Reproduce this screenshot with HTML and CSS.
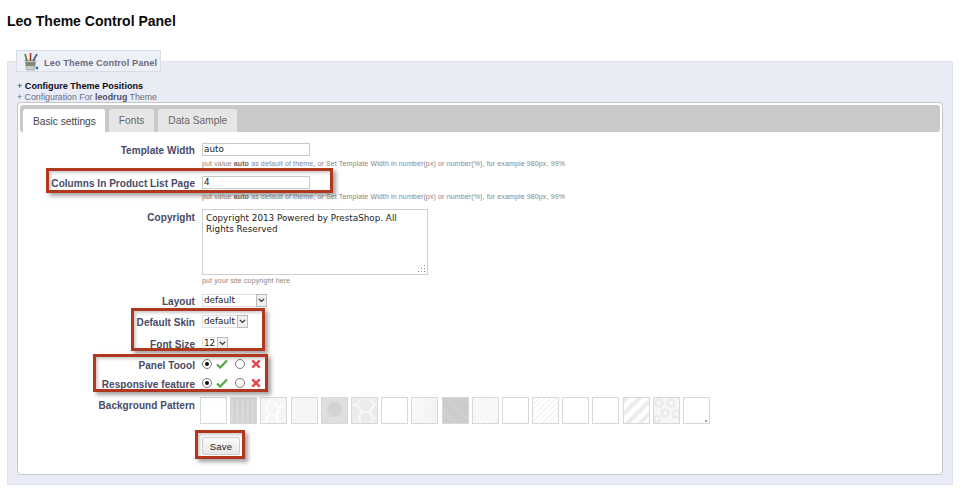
FILE: index.html
```html
<!DOCTYPE html>
<html lang="en">
<head>
<meta charset="utf-8">
<title>Leo Theme Control Panel</title>
<link rel="stylesheet" href="styles.css">
</head>
<body>
<h1 class="title">Leo Theme Control Panel</h1>
<fieldset class="panel">
  <legend class="legend">
    <svg class="legend-icon" width="19" height="19" viewBox="0 0 19 19">
      <path d="M4 8h11l-1.5 10h-8z" fill="#c9ccc8" stroke="#8b8f8c" stroke-width=".6"/>
      <rect x="5" y="10" width="9" height="4" fill="#7f8a76"/>
      <path d="M6 9L4 2" stroke="#5c7a3a" stroke-width="1.6"/>
      <path d="M9.5 9V1" stroke="#a33b2a" stroke-width="1.6"/>
      <path d="M12 9l4-7" stroke="#3c5f94" stroke-width="1.6"/>
      <circle cx="16" cy="16" r="1.4" fill="#2f78c4"/>
    </svg>
    <span class="legend-text">Leo Theme Control Panel</span>
  </legend>
  <div class="crumb crumb-strong">+ <b>Configure Theme Positions</b></div>
  <div class="crumb">+ Configuration For <b>leodrug</b> Theme</div>
  <div class="tabs">
    <div class="tabbar">
      <span class="tab tab-active">Basic settings</span>
      <span class="tab">Fonts</span>
      <span class="tab">Data Sample</span>
    </div>
    <form class="pane">
      <div class="row row-width">
        <label class="lbl">Template Width</label>
        <div class="field">
          <div class="textbox">auto</div>
          <p class="hint">put value <b>auto</b> as default of theme, or Set Template Width in number(px) or number(%), for example 980px, 99%</p>
        </div>
      </div>
      <div class="row row-cols">
        <label class="lbl">Columns In Product List Page</label>
        <div class="field">
          <div class="textbox">4</div>
          <p class="hint">put value <b>auto</b> as default of theme, or Set Template Width in number(px) or number(%), for example 980px, 99%</p>
        </div>
      </div>
      <div class="row row-copy">
        <label class="lbl">Copyright</label>
        <div class="field">
          <div class="textarea">Copyright 2013 Powered by PrestaShop. All Rights Reserved
            <svg class="grip" width="9" height="9" viewBox="0 0 9 9"><path d="M7 1h1v1H7zM4 4h1v1H4zM7 4h1v1H7zM1 7h1v1H1zM4 7h1v1H4zM7 7h1v1H7z" fill="#888"/></svg>
          </div>
          <p class="hint hint-copy">put your site copyright here</p>
        </div>
      </div>
      <div class="row row-layout">
        <label class="lbl">Layout</label>
        <div class="field"><div class="select select-layout"><span class="select-val">default</span><span class="caret"><svg width="7" height="5" viewBox="0 0 7 5"><path d="M.8.8l2.7 2.7L6.2.8" fill="none" stroke="#333" stroke-width="1.2"/></svg></span></div></div>
      </div>
      <div class="row row-skin">
        <label class="lbl">Default Skin</label>
        <div class="field"><div class="select select-skin"><span class="select-val">default</span><span class="caret"><svg width="7" height="5" viewBox="0 0 7 5"><path d="M.8.8l2.7 2.7L6.2.8" fill="none" stroke="#333" stroke-width="1.2"/></svg></span></div></div>
      </div>
      <div class="row row-font">
        <label class="lbl">Font Size</label>
        <div class="field"><div class="select select-font"><span class="select-val">12</span><span class="caret"><svg width="7" height="5" viewBox="0 0 7 5"><path d="M.8.8l2.7 2.7L6.2.8" fill="none" stroke="#333" stroke-width="1.2"/></svg></span></div></div>
      </div>
      <div class="row row-panel">
        <label class="lbl">Panel Toool</label>
        <div class="field toggle">
          <span class="radio radio-on"></span>
          <svg class="ico" width="12" height="10" viewBox="0 0 12 10"><path d="M1 5.5l3.2 3L11 1.5" fill="none" stroke="#55a648" stroke-width="2.2"/></svg>
          <span class="radio"></span>
          <svg class="ico" width="10" height="10" viewBox="0 0 10 10"><path d="M1.3 1.3l7.4 7.4M8.7 1.3L1.3 8.7" fill="none" stroke="#e8474c" stroke-width="2.4"/></svg>
        </div>
      </div>
      <div class="row row-resp">
        <label class="lbl">Responsive feature</label>
        <div class="field toggle">
          <span class="radio radio-on"></span>
          <svg class="ico" width="12" height="10" viewBox="0 0 12 10"><path d="M1 5.5l3.2 3L11 1.5" fill="none" stroke="#55a648" stroke-width="2.2"/></svg>
          <span class="radio"></span>
          <svg class="ico" width="10" height="10" viewBox="0 0 10 10"><path d="M1.3 1.3l7.4 7.4M8.7 1.3L1.3 8.7" fill="none" stroke="#e8474c" stroke-width="2.4"/></svg>
        </div>
      </div>
      <div class="row row-bg">
        <label class="lbl">Background Pattern</label>
        <div class="field swatches">
          <span class="sw"></span>
          <span class="sw sw-stripes"></span>
          <span class="sw sw-pale"><svg width="25" height="25" viewBox="0 0 25 25"><path d="M4 25L8 16 5 9 9 2M8 16l7 2 3-8 5-4M15 18l2 7M18 10l-5-6" fill="none" stroke="#fff" stroke-width="1.6"/></svg></span>
          <span class="sw sw-pale"></span>
          <span class="sw sw-blot"></span>
          <span class="sw sw-hexbg"><svg width="25" height="25" viewBox="0 0 25 25"><path d="M0 7h5l4-6M5 7l5 7-3 6 2 5M10 14h8l4-7h3M22 7l-4-6M18 14l3 6h4M21 20l-2 5" fill="none" stroke="#fafafa" stroke-width="1.6"/></svg></span>
          <span class="sw"></span>
          <span class="sw sw-fade"></span>
          <span class="sw sw-dots"></span>
          <span class="sw sw-noise"></span>
          <span class="sw"></span>
          <span class="sw sw-fine"></span>
          <span class="sw"></span>
          <span class="sw"></span>
          <span class="sw sw-wide"></span>
          <span class="sw sw-rings"><svg width="25" height="25" viewBox="0 0 25 25"><g fill="none" stroke="#e9e9e9" stroke-width="2"><circle cx="5" cy="5" r="3.5"/><circle cx="17" cy="5" r="3.5"/><circle cx="11" cy="15" r="3.5"/><circle cx="22" cy="16" r="3.5"/><circle cx="3" cy="21" r="3"/></g></svg></span>
          <span class="sw sw-speck"></span>
        </div>
      </div>
      <div class="row row-save">
        <span></span>
        <div class="field"><button type="button" class="save">Save</button></div>
      </div>
      <div class="mark mark-cols"></div>
      <div class="mark mark-skin"></div>
      <div class="mark mark-toggle"></div>
      <div class="mark mark-save"></div>
    </form>
  </div>
</fieldset>
</body>
</html>
```

FILE: styles.css
```css
html, body { margin: 0; padding: 0; background: #fff; }
body { width: 960px; height: 492px; overflow: hidden; font-family: "Liberation Sans", Arial, sans-serif; color: #383b58; }

.title { margin: 0; padding: 13px 0 0 7px; height: 50px; box-sizing: border-box; font-size: 14px; line-height: 16px; font-weight: bold; color: #0b0b0b; }

.panel { margin: 0 7px; padding: 9px 9px 9px; min-width: 0; height: 435px; box-sizing: border-box; border: 1px solid #dfe1ec; background: #e9ecf5; }
.legend { margin-left: -1px; padding: 0 3px 0 4px; height: 22px; box-sizing: border-box; display: flex; align-items: center; gap: 4px; border: 1px solid #d9dbe7; background: #eef0f7; font-size: 9.2px; font-weight: bold; color: #6a6d80; letter-spacing: .1px; }
.legend-icon { display: block; }
.legend-text { padding-top: 4px; }

.crumb { font-size: 8.8px; line-height: 11px; color: #6a6d80; }
.crumb-strong { font-size: 9.1px; color: #333; }
.crumb b { color: #50526a; }
.crumb-strong b { color: #0d0d10; }

.tabs { margin-top: -1px; height: 373px; box-sizing: border-box; padding: 2px; border: 1px solid #c6c6c8; border-radius: 4px; background: #fff; display: flex; flex-direction: column; }
.tabbar { flex: none; height: 27px; box-sizing: border-box; padding: 4px 0 0 3px; display: flex; gap: 4px; background: #c9c9c9; border-radius: 3px; }
.tab { height: 23px; box-sizing: border-box; padding: 0 10px; display: flex; align-items: center; font-size: 10.2px; color: #666; background: #e6e6e6; border-radius: 3px 3px 0 0; }
.tab-active { height: 24px; padding-right: 9px; background: #fff; color: #444; }

.pane { position: relative; flex: 1; padding-top: 11px; }

.row { display: grid; grid-template-columns: 175px 1fr; column-gap: 7px; }
.lbl { padding-top: 2px; text-align: right; font-size: 10px; line-height: 11px; font-weight: bold; color: #484a65; letter-spacing: .05px; }
.field { min-width: 0; }

.textbox { width: 108px; height: 13px; box-sizing: border-box; border: 1px solid #c9c9c9; font-family: "DejaVu Sans", sans-serif; font-size: 8.8px; line-height: 11px; color: #222; padding-left: 1px; background: #fff; }
.hint { margin: 3px 0 0; font-size: 7px; line-height: 9px; color: #858585; letter-spacing: .135px; white-space: nowrap; }
.hint b { color: #666; font-weight: bold; }
.hint-copy { margin-top: 1px; }

.row-cols { margin-top: 8px; }
.row-copy { margin-top: 8px; }
.row-copy .lbl { padding-top: 3px; }
.textarea { position: relative; width: 226px; height: 66px; box-sizing: border-box; border: 1px solid #cfcfcf; padding: 3px 20px 0 3px; font-family: "DejaVu Sans", sans-serif; font-size: 8.8px; line-height: 11px; color: #222; background: #fff; }
.grip { position: absolute; right: 1px; bottom: 1px; }

.row-layout { margin-top: 9px; }
.row-skin { margin-top: 8px; }
.row-skin .lbl { padding-top: 3px; line-height: 10px; }
.row-font { margin-top: 9px; }
.row-panel { margin-top: 8px; }
.row-resp { margin-top: 6px; }
.row-bg { margin-top: 7px; }
.row-bg .lbl { padding-top: 3px; }
.row-save { margin-top: 13px; }

.select { display: flex; height: 13px; box-sizing: border-box; background: #fff; border: 1px solid #e2e2e2; font-family: "DejaVu Sans", sans-serif; font-size: 8.8px; line-height: 11px; color: #222; }
.select-val { flex: 1; padding-left: 1px; white-space: nowrap; }
.caret { flex: none; width: 11px; box-sizing: border-box; display: flex; align-items: center; justify-content: center; border: 1px solid #bbb; margin: -1px -1px -1px 0; background: #f0f0f0; }
.select-layout { width: 65px; }
.select-skin { width: 46px; }
.select-font { width: 26px; }

.toggle { display: flex; align-items: center; height: 13px; margin-top: -1px; }
.radio { width: 10px; height: 10px; box-sizing: border-box; border-radius: 50%; border: 1px solid #777; background: #fff; position: relative; flex: none; }
.radio-on::after { content: ""; position: absolute; inset: 2px; border-radius: 50%; background: #111; }
.ico { flex: none; margin-left: 4px; margin-right: 7px; }
.ico:last-child { margin-left: 6px; }

.swatches { display: flex; gap: 3.2px; margin-left: -2px; }
.sw { flex: none; width: 27px; height: 27px; box-sizing: border-box; border: 1px solid #d8d8d8; background-color: #fff; }
.sw svg { display: block; }
.sw-stripes { background: repeating-linear-gradient(90deg, #d8d8d8 0 3px, #d0d0d0 3px 5px); }
.sw-pale { background: #f5f5f5; }
.sw-blot { background: radial-gradient(circle at 50% 45%, #d2d2d2 0 6px, #e0e0e0 9px, #dcdcdc 100%); }
.sw-hexbg { background: #ececec; }
.sw-fade { background: linear-gradient(100deg, #fafafa, #f2f2f2); }
.sw-dots { background: repeating-linear-gradient(45deg, #c8c8c8 0 1px, #d2d2d2 1px 2px); }
.sw-noise { background: repeating-linear-gradient(30deg, #f3f3f3 0 1px, #fafafa 1px 3px); }
.sw-fine { background: repeating-linear-gradient(135deg, #f3f3f3 0 1px, #fff 1px 4px); }
.sw-wide { background: repeating-linear-gradient(135deg, #ececec 0 4px, #fff 4px 9px); }
.sw-rings { background: #f6f6f6; }
.sw-speck { background: radial-gradient(circle at 22px 23px, #999 0 1px, #fff 1.5px); }

.save { display: block; width: 38px; height: 18px; padding: 0; border: 1px solid #cfcfcf; border-radius: 2px; background: linear-gradient(#fafafa, #e8e8e8); font: 9.5px "Liberation Sans", Arial, sans-serif; color: #222; letter-spacing: .2px; }

.mark { position: absolute; box-sizing: border-box; border: 3px solid #b1371f; box-shadow: 3px 3px 4px rgba(90, 90, 90, .55), inset 2px 2px 3px rgba(90, 90, 90, .3); pointer-events: none; }
.mark-cols { left: 26px; top: 36px; width: 287px; height: 25px; }
.mark-skin { left: 111px; top: 176px; width: 134px; height: 43px; }
.mark-toggle { left: 73px; top: 222px; width: 175px; height: 38px; }
.mark-save { left: 175px; top: 298px; width: 50px; height: 29px; }
```
